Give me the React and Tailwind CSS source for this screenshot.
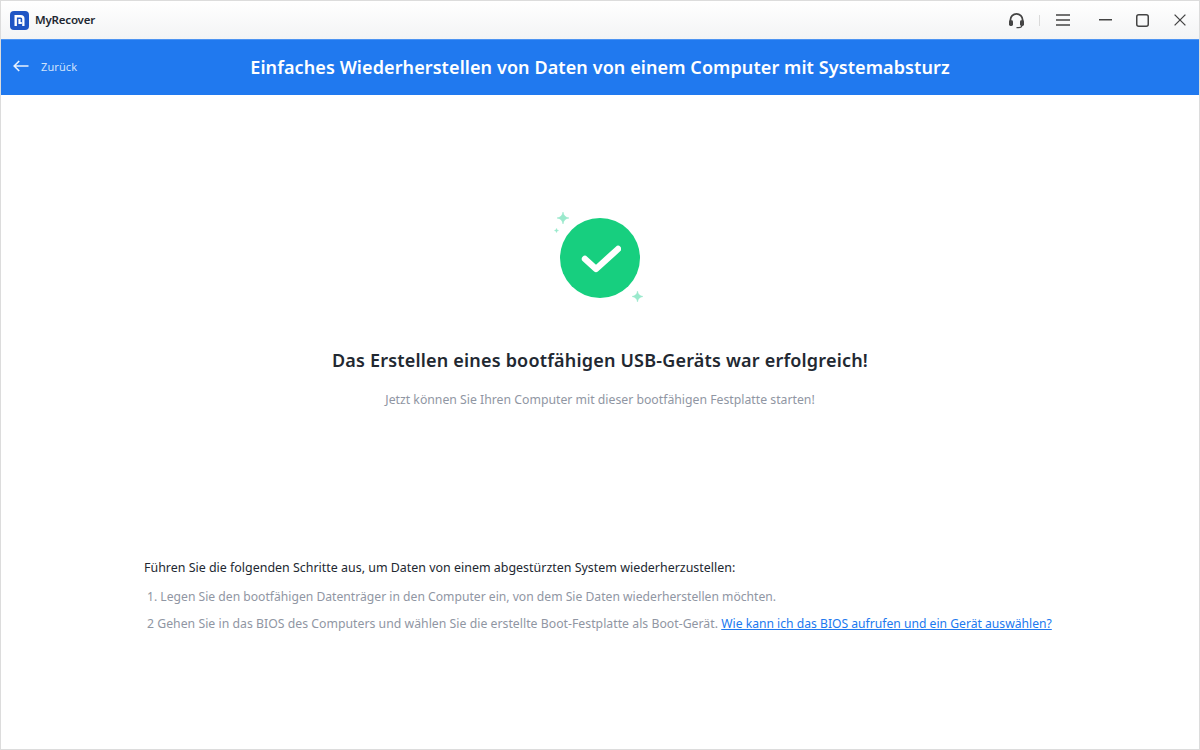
import React from "react";

function Logo() {
  return (
    <svg width="19" height="19" viewBox="0 0 19 19" className="shrink-0">
      <rect width="19" height="19" rx="4" fill="#1f55c4" />
      <path d="M4.5 4h6.3a3.7 3.7 0 0 1 3.7 3.7V15h-2.3V7.9a1.5 1.5 0 0 0-1.5-1.5H6.9V15H4.5z" fill="#fff" />
      <path d="M8.4 8h2.2v3h1.2v1.9H8.4z" fill="#fff" />
    </svg>
  );
}

function Sparkle({ s, className }) {
  return (
    <svg width={s} height={s} viewBox="0 0 12 12" className={className}>
      <path d="M6 0C6.6 3.6 8.4 5.4 12 6 8.4 6.6 6.6 8.4 6 12 5.4 8.4 3.6 6.6 0 6 3.6 5.4 5.4 3.6 6 0z" fill="#9ae9cc" stroke="#9ae9cc" strokeWidth="0.5" />
    </svg>
  );
}

export default function App() {
  return (
    <div className="w-[1200px] h-[750px] flex flex-col bg-white border border-[#dcdcdc] font-['Noto_Sans','Open_Sans',sans-serif] overflow-hidden">
      <header className="h-[38px] shrink-0 flex items-center bg-gradient-to-b from-white to-[#f3f4f5] pl-[9px]">
        <Logo />
        <span className="ml-[6px] text-[11.5px] font-semibold text-[#222831] tracking-[-0.2px]">MyRecover</span>
        <div className="ml-auto flex items-center">
          <svg width="17" height="17" viewBox="0 0 17 17" fill="none">
            <path d="M2.4 10V8a6.1 6.1 0 0 1 12.2 0v2" stroke="#444" strokeWidth="1.8" />
            <rect x="1" y="8.2" width="4" height="5.8" rx="1.4" fill="#444" />
            <rect x="12" y="8.2" width="4" height="5.8" rx="1.4" fill="#444" />
            <path d="M13.8 13.6c0 1.6-1.6 2.1-3.2 2.1H8.5" stroke="#444" strokeWidth="1.2" />
          </svg>
          <div className="ml-[14px] w-px h-[11px] bg-[#dadada]" />
          <svg width="14" height="12" viewBox="0 0 14 12" className="ml-[16px]" fill="none">
            <path d="M0 1h14M0 6h14M0 11h14" stroke="#444" strokeWidth="1.4" />
          </svg>
          <svg width="13" height="2" viewBox="0 0 13 2" className="ml-[29px]">
            <rect width="13" height="1.5" fill="#444" />
          </svg>
          <svg width="13" height="13" viewBox="0 0 13 13" className="ml-[24px]" fill="none">
            <rect x="0.75" y="0.75" width="11.5" height="11.5" rx="2" stroke="#444" strokeWidth="1.5" />
          </svg>
          <svg width="12" height="12" viewBox="0 0 12 12" className="ml-[25px] mr-[13px]" fill="none">
            <path d="M0.6 0.6l10.8 10.8M11.4 0.6L0.6 11.4" stroke="#444" strokeWidth="1.3" />
          </svg>
        </div>
      </header>

      <div className="h-[56px] shrink-0 relative flex items-center justify-center bg-[#2079ef] border-t border-[#4d94f2]">
        <div className="absolute left-[12px] top-0 h-full flex items-center text-[#cfe2fb]">
          <svg width="16" height="12" viewBox="0 0 16 12" fill="none" className="-mt-[3px]">
            <path d="M15.5 6H1.2M6.2 1L1.2 6l5 5" stroke="#e8f1fd" strokeWidth="1.6" />
          </svg>
          <span className="ml-[12px] text-[11px] tracking-[0.1px]">Zurück</span>
        </div>
        <h1 className="text-[18px] font-semibold text-white tracking-[0.09px]">
          Einfaches Wiederherstellen von Daten von einem Computer mit Systemabsturz
        </h1>
      </div>

      <main className="flex-1 flex flex-col items-center">
        <div className="relative mt-[123px] w-[80px] h-[80px] rounded-full bg-[#17cf7f] flex items-center justify-center">
          <svg width="42" height="32" viewBox="0 0 42 32" fill="none">
            <path d="M6 17l11 10L39 7" stroke="#fff" strokeWidth="6.4" strokeLinecap="round" strokeLinejoin="round" />
          </svg>
          <Sparkle s={12} className="absolute left-[-3px] top-[-6px]" />
          <Sparkle s={5} className="absolute left-[-6px] top-[10px]" />
          <Sparkle s={11} className="absolute right-[-3px] bottom-[-4px]" />
        </div>
        <h2 className="mt-[49px] text-[18px] leading-[26px] font-semibold text-[#222831] tracking-[0.19px]">
          Das Erstellen eines bootfähigen USB-Geräts war erfolgreich!
        </h2>
        <p className="mt-[18px] text-[12.25px] leading-[18px] text-[#9096a3]">
          Jetzt können Sie Ihren Computer mit dieser bootfähigen Festplatte starten!
        </p>

        <section className="self-start ml-[143px] mt-[150px] text-[12.25px] leading-[18px]">
          <p className="text-[12.45px] text-[#222831]">
            Führen Sie die folgenden Schritte aus, um Daten von einem abgestürzten System wiederherzustellen:
          </p>
          <p className="mt-[11px] ml-[3px] text-[12.15px] text-[#9096a3]">
            1. Legen Sie den bootfähigen Datenträger in den Computer ein, von dem Sie Daten wiederherstellen möchten.
          </p>
          <p className="mt-[9px] ml-[3px] text-[#9096a3] tracking-[0.02px]">
            2 Gehen Sie in das BIOS des Computers und wählen Sie die erstellte Boot-Festplatte als Boot-Gerät.{" "}
            <a href="#" className="text-[12.15px] tracking-normal text-[#2079ef] underline">Wie kann ich das BIOS aufrufen und ein Gerät auswählen?</a>
          </p>
        </section>
      </main>
    </div>
  );
}
